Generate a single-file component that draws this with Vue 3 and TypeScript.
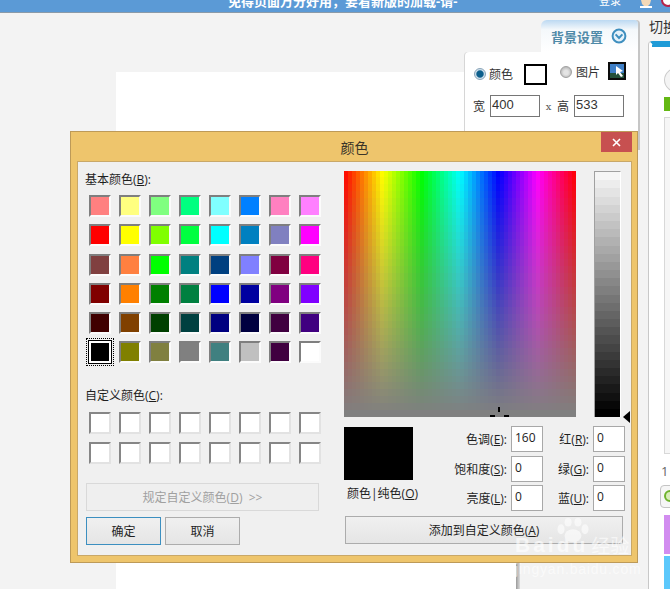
<template>
  <div class="page">
    <header class="topbar">
      <span class="notice">免得页面万分好用，要看新版的加载-请-</span>
      <span class="login">登录</span>
      <svg class="user" width="36" height="8" viewBox="0 0 36 8">
        <path d="M2 0h10l-1 4-2 2H5L3 4z" fill="#f4d9b8" />
        <path d="M1 6h12v2H1z" fill="#fff" />
        <circle cx="29" cy="0" r="6" fill="#fff" stroke="#b5234a" stroke-width="2" />
      </svg>
    </header>

    <div class="body">
      <div class="stage">
        <div class="sheet"></div>
      </div>
      <div class="gutter"></div>
      <aside class="side">
        <div class="side-title">切换</div>
        <div class="side-card">
          <div class="side-circle"></div>
          <div class="side-tag"></div>
          <div class="side-box"></div>
          <div class="side-count">1</div>
          <div class="side-chip"><span class="chip-dot"></span></div>
          <div class="side-purple"></div>
          <div class="side-blue"></div>
        </div>
      </aside>
    </div>

    <section class="bg-panel">
      <div class="bg-tab">
        <span>背景设置</span>
        <svg width="16" height="16" viewBox="0 0 16 16">
          <circle cx="8" cy="8" r="6.4" fill="#e6f2fa" stroke="#3f8fbf" stroke-width="2" />
          <path d="M4.6 6.4 8 10l3.4-3.6" fill="none" stroke="#3f8fbf" stroke-width="2" />
        </svg>
      </div>
      <div class="bg-body">
        <div class="bg-row first">
          <span class="radio on"></span>
          <span class="bg-label">颜色</span>
          <span class="bg-color"></span>
          <span class="radio raised"></span>
          <span class="bg-label raised">图片</span>
          <svg class="bg-pic" width="18" height="18" viewBox="0 0 18 18">
            <rect width="18" height="18" fill="#0c0c0c" />
            <rect x="2" y="2" width="14" height="14" fill="#3f7fc6" />
            <rect x="2" y="11" width="14" height="5" fill="#24513a" />
            <path d="M8 4l7 5-3 1 3 4-2 1-3-4-2 2z" fill="#fff" />
          </svg>
        </div>
        <div class="bg-row">
          <span class="bg-label">宽</span>
          <span class="bg-input">400</span>
          <span class="times">x</span>
          <span class="bg-label">高</span>
          <span class="bg-input">533</span>
        </div>
      </div>
    </section>

    <section class="dialog">
      <div class="titlebar">
        <span>颜色</span>
        <button class="close">
          <svg width="9" height="9" viewBox="0 0 9 9">
            <path d="M1 1l7 7M8 1 1 8" stroke="#fff" stroke-width="1.6" />
          </svg>
        </button>
      </div>
      <div class="client">
        <div class="left">
          <div class="caption">基本颜色(<u>B</u>):</div>
          <div class="wells">
            <span
              v-for="(c, i) in basicColors"
              :key="`b-${i}`"
              class="well"
              :class="{ picked: i === 40 }"
              :style="{ background: c }"
            ></span>
          </div>
          <div class="caption custom-caption">自定义颜色(<u>C</u>):</div>
          <div class="wells custom-wells">
            <span v-for="i in 16" :key="`c-${i}`" class="well blank"></span>
          </div>
          <button class="btn define" disabled>规定自定义颜色(<u>D</u>)&nbsp; &gt;&gt;</button>
          <div class="actions">
            <button class="btn ok">确定</button>
            <button class="btn">取消</button>
          </div>
        </div>

        <div class="right">
          <div class="picker">
            <div class="spectrum">
              <canvas ref="spectrum" width="232" height="246"></canvas>
              <svg class="cross" width="19" height="11" viewBox="0 0 19 11">
                <path d="M8 0h2v5H8zM0 8h5v2H0zM14 8h5v2h-5z" fill="#000" />
              </svg>
            </div>
            <div class="lum">
              <span v-for="(g, i) in lumBands" :key="`l-${i}`" :style="{ background: g }"></span>
            </div>
            <span class="lum-arrow"></span>
          </div>

          <div class="values">
            <div class="preview-col">
              <div class="preview"></div>
              <div class="preview-label">颜色|纯色(<u>O</u>)</div>
            </div>
            <div class="fields">
              <template v-for="f in fields" :key="f.label">
                <label>{{ f.label }}(<u>{{ f.key }}</u>):</label>
                <span class="field">{{ f.value }}</span>
              </template>
            </div>
          </div>

          <button class="btn add">添加到自定义颜色(<u>A</u>)</button>
        </div>
      </div>
    </section>

    <div class="watermark">
      <svg class="paw" width="34" height="24" viewBox="0 0 46 34">
        <ellipse cx="23" cy="25" rx="12" ry="9" />
        <ellipse cx="6" cy="16" rx="5" ry="7" />
        <ellipse cx="16" cy="6" rx="5" ry="6" />
        <ellipse cx="30" cy="6" rx="5" ry="6" />
        <ellipse cx="40" cy="16" rx="5" ry="7" />
      </svg>
      <div class="mark-main"><span class="mark-en">Baidu</span><span class="mark-cn">经验</span></div>
      <div class="mark-url">jingyan.baidu.com</div>
    </div>
  </div>
</template>

<script setup lang="ts">
import { onMounted, ref } from "vue";

const basicColors = [
  "#ff8080", "#ffff80", "#80ff80", "#00ff80", "#80ffff", "#0080ff", "#ff80c0", "#ff80ff",
  "#ff0000", "#ffff00", "#80ff00", "#00ff40", "#00ffff", "#0080c0", "#8080c0", "#ff00ff",
  "#804040", "#ff8040", "#00ff00", "#008080", "#004080", "#8080ff", "#800040", "#ff0080",
  "#800000", "#ff8000", "#008000", "#008040", "#0000ff", "#0000a0", "#800080", "#8000ff",
  "#400000", "#804000", "#004000", "#004040", "#000080", "#000040", "#400040", "#400080",
  "#000000", "#808000", "#808040", "#808080", "#408080", "#c0c0c0", "#400040", "#ffffff",
];

const fields = [
  { label: "色调", key: "E", value: "160" },
  { label: "红", key: "R", value: "0" },
  { label: "饱和度", key: "S", value: "0" },
  { label: "绿", key: "G", value: "0" },
  { label: "亮度", key: "L", value: "0" },
  { label: "蓝", key: "U", value: "0" },
];

const lumBands = Array.from({ length: 30 }, (_, i) => {
  const v = Math.round(245 * (1 - i / 29));
  return `rgb(${v},${v},${v})`;
});

const spectrum = ref<HTMLCanvasElement | null>(null);

onMounted(() => {
  const ctx = spectrum.value?.getContext("2d");
  if (!ctx) return;
  const cols = 58;
  const rows = 36;
  const w = 232 / cols;
  const h = 246 / rows;
  for (let y = 0; y < rows; y++) {
    for (let x = 0; x < cols; x++) {
      const hue = ((x + 0.5) / cols) * 360;
      const sat = 100 * (1 - y / (rows - 1));
      ctx.fillStyle = `hsl(${hue}, ${sat}%, 50%)`;
      ctx.fillRect(Math.floor(x * w), Math.floor(y * h), Math.ceil(w), Math.ceil(h));
    }
  }
});
</script>

<style scoped>
.page {
  position: relative;
  width: 670px;
  height: 589px;
  overflow: hidden;
  background: #f3f3f3;
  font-family: "Open Sans", "Noto Sans CJK SC", sans-serif;
  font-size: 12px;
  color: #222;
}

.topbar {
  height: 12px;
  background: #5b9ad6;
  border-bottom: 1px solid #8a9aa8;
  display: flex;
  align-items: flex-end;
  overflow: hidden;
  color: #fff;
}

.notice {
  margin-left: 228px;
  width: 250px;
  flex: none;
  font-size: 13px;
  font-weight: 700;
  line-height: 16px;
  margin-bottom: 3px;
  white-space: nowrap;
}

.login {
  margin-left: 121px;
  font-size: 11px;
  line-height: 16px;
  margin-bottom: 3px;
  flex: none;
}

.user {
  margin-left: 18px;
  flex: none;
  align-self: flex-start;
}

.body {
  display: flex;
  height: 576px;
}

.stage {
  width: 516px;
  flex: none;
  padding: 59px 0 0 116px;
  box-sizing: border-box;
}

.sheet {
  width: 400px;
  height: 533px;
  background: #fff;
}

.gutter {
  width: 4px;
  flex: none;
  margin-top: 59px;
  background: linear-gradient(90deg, #9a9a9a, #dcdcdc);
}

.side {
  margin-left: 129px;
  width: 21px;
  flex: none;
  position: relative;
  white-space: nowrap;
}

.side-title {
  font-size: 14px;
  line-height: 18px;
  margin: 5px 0 5px 0;
  color: #333;
}

.side-card {
  width: 40px;
  height: 560px;
  background: #fff;
  border-top: 3px solid #1f9bd7;
  border-left: 3px solid #1f9bd7;
  border-top-left-radius: 4px;
  box-sizing: border-box;
  padding-left: 12px;
  border-left-color: #fff;
  box-shadow: inset 3px 22px 0 -19px #1f9bd7, -1px 0 0 #c8c8c8;
}

.side-circle {
  width: 28px;
  height: 24px;
  margin-top: 23px;
  border: 1px solid #ccc;
  border-radius: 50%;
  background: #f4f4f4;
}

.side-tag {
  width: 24px;
  height: 14px;
  margin-top: 4px;
  background: #64b814;
}

.side-box {
  height: 337px;
  width: 30px;
  margin-top: 6px;
  border: 1px solid #d8d8d8;
  background: #f6f6f6;
  box-sizing: border-box;
}

.side-count {
  margin: 9px 0 0 -3px;
  font-size: 13px;
  line-height: 16px;
  color: #666;
}

.side-chip {
  width: 30px;
  height: 23px;
  margin: 6px 0 0 -4px;
  border: 1px solid #c4c4c4;
  border-radius: 4px;
  background: #f6f6f6;
  box-sizing: border-box;
  padding: 4px 0 0 3px;
}

.chip-dot {
  display: block;
  width: 12px;
  height: 12px;
  border-radius: 50%;
  border: 2px solid #6fb32c;
  box-sizing: border-box;
  background: #d8ecb8;
}

.side-purple {
  height: 39px;
  margin-top: 7px;
  background: #d28df0;
}

.side-blue {
  height: 40px;
  margin-top: 2px;
  background: #5cc8fb;
}

.bg-panel {
  position: absolute;
  left: 465px;
  top: 20px;
  width: 173px;
  height: 130px;
  display: flex;
  flex-direction: column;
  align-items: flex-end;
}

.bg-tab {
  width: 97px;
  height: 32px;
  box-sizing: border-box;
  padding: 0 11px 0 10px;
  display: flex;
  align-items: center;
  justify-content: space-between;
  background: linear-gradient(#bcd9f2, #f4f8fb 30%, #fff);
  border-top-left-radius: 6px;
  border-top-right-radius: 4px;
  box-shadow: 2px 0 0 #c6c6c6;
  font-size: 13px;
  font-weight: 700;
  color: #4f8aa8;
}

.bg-body {
  width: 173px;
  flex: 1;
  box-sizing: border-box;
  background: #fff;
  border-top-left-radius: 4px;
  box-shadow: 2px 0 0 #c6c6c6, -1px 0 0 #d6d6d6;
  padding: 11px 0 0 8px;
}

.bg-row {
  display: flex;
  align-items: center;
  height: 22px;
  color: #333;
}

.bg-row.first {
  padding-left: 1px;
  margin-bottom: 10px;
}

.bg-label {
  flex: none;
}

.raised {
  margin-top: -4px;
}

.radio {
  width: 12px;
  height: 12px;
  flex: none;
  border-radius: 50%;
  border: 1px solid #a0a0a0;
  background: radial-gradient(circle at 50% 55%, #e4e4e4 30%, #bdbdbd 70%);
  box-sizing: border-box;
  margin-right: 4px;
}

.radio.on {
  border-color: #8aa4b8;
  background: radial-gradient(circle, #0d5f8c 45%, #cfe0ec 60%);
  margin-right: 3px;
}

.bg-color {
  width: 23px;
  height: 21px;
  box-sizing: border-box;
  border: 2px solid #000;
  background: #fff;
  margin: 0 13px 0 11px;
}

.bg-pic {
  margin-left: 8px;
  margin-top: -7px;
}

.bg-input {
  width: 50px;
  height: 22px;
  box-sizing: border-box;
  border: 1px solid #767676;
  padding-left: 1px;
  line-height: 18px;
  font-family: "Liberation Sans", sans-serif;
  font-size: 13px;
  margin-left: 5px;
}

.times {
  width: 17px;
  text-align: center;
  font-family: "DejaVu Serif", serif;
  font-size: 10px;
  color: #555;
}

.dialog {
  position: absolute;
  left: 70px;
  top: 131px;
  width: 568px;
  height: 432px;
  box-sizing: border-box;
  background: #eec56c;
  border: 1px solid #bd9a58;
  padding: 0 5px 6px 6px;
  display: flex;
  flex-direction: column;
}

.titlebar {
  height: 29px;
  flex: none;
  position: relative;
  display: flex;
  align-items: center;
  justify-content: center;
  font-size: 14px;
  color: #3a3428;
}

.close {
  position: absolute;
  right: 0;
  top: 0;
  width: 31px;
  height: 20px;
  padding: 0;
  border: 0;
  background: #c75050;
  display: flex;
  align-items: center;
  justify-content: center;
}

.client {
  flex: 1;
  display: flex;
  background: #f0f0f0;
  border: 1px solid #c9a868;
}

.left {
  width: 266px;
  flex: none;
  box-sizing: border-box;
  padding: 11px 0 0 7px;
}

.caption {
  height: 14px;
  line-height: 14px;
  color: #1f1f1f;
  white-space: nowrap;
}

.wells {
  display: grid;
  grid-template-columns: repeat(8, 22px);
  grid-auto-rows: 22px;
  column-gap: 8px;
  row-gap: 7.3px;
  margin: 8px 0 0 4px;
}

.well {
  box-sizing: border-box;
  border: 2px solid;
  border-color: #7f7f7f #fbfbfb #fbfbfb #7f7f7f;
}

.well.picked {
  border-color: #fff;
  box-shadow: 0 0 0 1px #000;
  outline: 1px dotted #000;
  outline-offset: 2px;
}

.well.blank {
  background: #fff;
  border-color: #868686 #e2e2e2 #e2e2e2 #868686;
}

.custom-caption {
  margin-top: 26px;
}

.custom-wells {
  margin-top: 9px;
}

.btn {
  font: inherit;
  color: #1f1f1f;
  width: 75px;
  height: 28px;
  padding: 0;
  border: 1px solid #acacac;
  background: linear-gradient(#f0f0f0, #e5e5e5);
  white-space: nowrap;
}

.define {
  display: block;
  width: 233px;
  margin: 19px 0 0 1px;
  background: #efefef;
  border-color: #d9d9d9;
  color: #a0a0a0;
}

.actions {
  display: flex;
  gap: 4px;
  margin: 6px 0 0 1px;
}

.ok {
  border-color: #3c8fc0;
}

.right {
  flex: 1;
  padding-top: 9px;
}

.picker {
  position: relative;
  display: flex;
  gap: 18px;
}

.spectrum {
  position: relative;
  width: 232px;
  height: 246px;
  overflow: hidden;
}

.spectrum canvas {
  display: block;
}

.cross {
  position: absolute;
  left: 146px;
  top: 236px;
}

.lum {
  width: 27px;
  height: 246px;
  display: flex;
  flex-direction: column;
  box-sizing: border-box;
  border-top: 1px solid #a0a0a0;
  border-left: 1px solid #a0a0a0;
  border-right: 1px solid #fff;
}

.lum span {
  flex: 1;
}

.lum-arrow {
  position: absolute;
  left: 279px;
  top: 240px;
  width: 0;
  height: 0;
  border-top: 6.5px solid transparent;
  border-bottom: 6.5px solid transparent;
  border-right: 7px solid #000;
}

.values {
  display: flex;
  margin-top: 9px;
}

.preview-col {
  width: 69px;
  flex: none;
  padding-top: 1px;
}

.preview {
  height: 53px;
  background: #000;
}

.preview-label {
  margin: 6px 0 0 3px;
  line-height: 16px;
  white-space: nowrap;
  color: #1f1f1f;
}

.fields {
  display: grid;
  grid-template-columns: 98px 32px 50px 32px;
  grid-auto-rows: 26px;
  row-gap: 3.5px;
  align-items: center;
}

.fields label {
  text-align: right;
  padding-right: 4px;
  white-space: nowrap;
  color: #1f1f1f;
}

.field {
  box-sizing: border-box;
  height: 26px;
  border: 1px solid #a8a8a8;
  background: #fff;
  padding: 0 0 2px 3px;
  line-height: 21px;
  font-family: "Open Sans", sans-serif;
}

.add {
  display: block;
  width: 278px;
  margin: 5px 0 0 1px;
}

.watermark {
  position: absolute;
  left: 515px;
  top: 517px;
  width: 125px;
  height: 60px;
  color: #fff;
  opacity: 0.6;
  pointer-events: none;
}

.paw {
  position: absolute;
  left: 41px;
  top: 1px;
  fill: #fff;
}

.mark-main {
  position: absolute;
  left: 0;
  top: 15px;
  display: flex;
  align-items: center;
  font-family: "Liberation Sans", sans-serif;
  font-size: 21px;
  font-weight: 700;
  line-height: 26px;
  white-space: nowrap;
}

.mark-en {
  letter-spacing: 3px;
}

.mark-cn {
  font-family: "Noto Sans CJK SC", sans-serif;
  font-size: 19px;
  font-weight: 400;
  margin-left: 3px;
}

.mark-url {
  position: absolute;
  left: 0;
  top: 44px;
  font-family: "Liberation Sans", sans-serif;
  font-size: 14px;
  line-height: 16px;
  letter-spacing: 0.8px;
  white-space: nowrap;
}
</style>
